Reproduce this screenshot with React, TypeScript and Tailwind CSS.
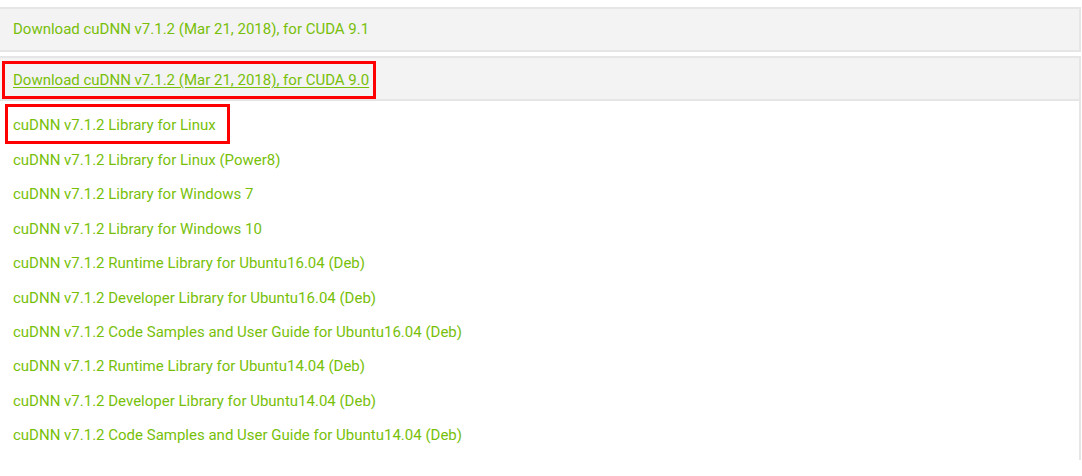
import React from "react";

const files = [
  "cuDNN v7.1.2 Library for Linux (Power8)",
  "cuDNN v7.1.2 Library for Windows 7",
  "cuDNN v7.1.2 Library for Windows 10",
  "cuDNN v7.1.2 Runtime Library for Ubuntu16.04 (Deb)",
  "cuDNN v7.1.2 Developer Library for Ubuntu16.04 (Deb)",
  "cuDNN v7.1.2 Code Samples and User Guide for Ubuntu16.04 (Deb)",
  "cuDNN v7.1.2 Runtime Library for Ubuntu14.04 (Deb)",
  "cuDNN v7.1.2 Developer Library for Ubuntu14.04 (Deb)",
  "cuDNN v7.1.2 Code Samples and User Guide for Ubuntu14.04 (Deb)",
];

const App: React.FC = () => {
  return (
    <div
      className="w-[1082px] h-[476px] overflow-hidden bg-white pt-[7px] text-[15px] text-[#78bf0a]"
      style={{ fontFamily: "Roboto, 'Liberation Sans', sans-serif" }}
    >
      {/* collapsed release */}
      <div className="w-[1081px] h-[45px] flex items-center pl-[13px] bg-[#f3f3f3] border-y-2 border-r-2 border-[#e6e6e6]">
        <a href="#">Download cuDNN v7.1.2 (Mar 21, 2018), for CUDA 9.1</a>
      </div>

      {/* expanded release */}
      <div className="mt-[4px] w-[1081px] h-[404px] border-t-2 border-r-2 border-[#e6e6e6]">
        <div className="h-[43px] pl-[2px] pt-[3px] bg-[#f3f3f3] border-b-2 border-[#e6e6e6]">
          <div className="w-[374px] h-[38px] border-[3px] border-[#ff0000] pl-[8px] pt-[6px] leading-[20px]">
            <a href="#" className="underline underline-offset-2">
              Download cuDNN v7.1.2 (Mar 21, 2018), for CUDA 9.0
            </a>
          </div>
        </div>

        <div className="flex flex-col pt-[3px]">
          <div className="ml-[5px] w-[225px] h-[40px] border-[3px] border-[#ff0000] pl-[5px] pt-[10px] leading-[17px]">
            <a href="#">cuDNN v7.1.2 Library for Linux</a>
          </div>
          <div className="-mt-[1px]">
            {files.map((f) => (
              <div key={f} className="h-[34.4px] leading-[34.4px] pl-[13px]">
                <a href="#">{f}</a>
              </div>
            ))}
          </div>
        </div>
      </div>
    </div>
  );
};

export default App;
